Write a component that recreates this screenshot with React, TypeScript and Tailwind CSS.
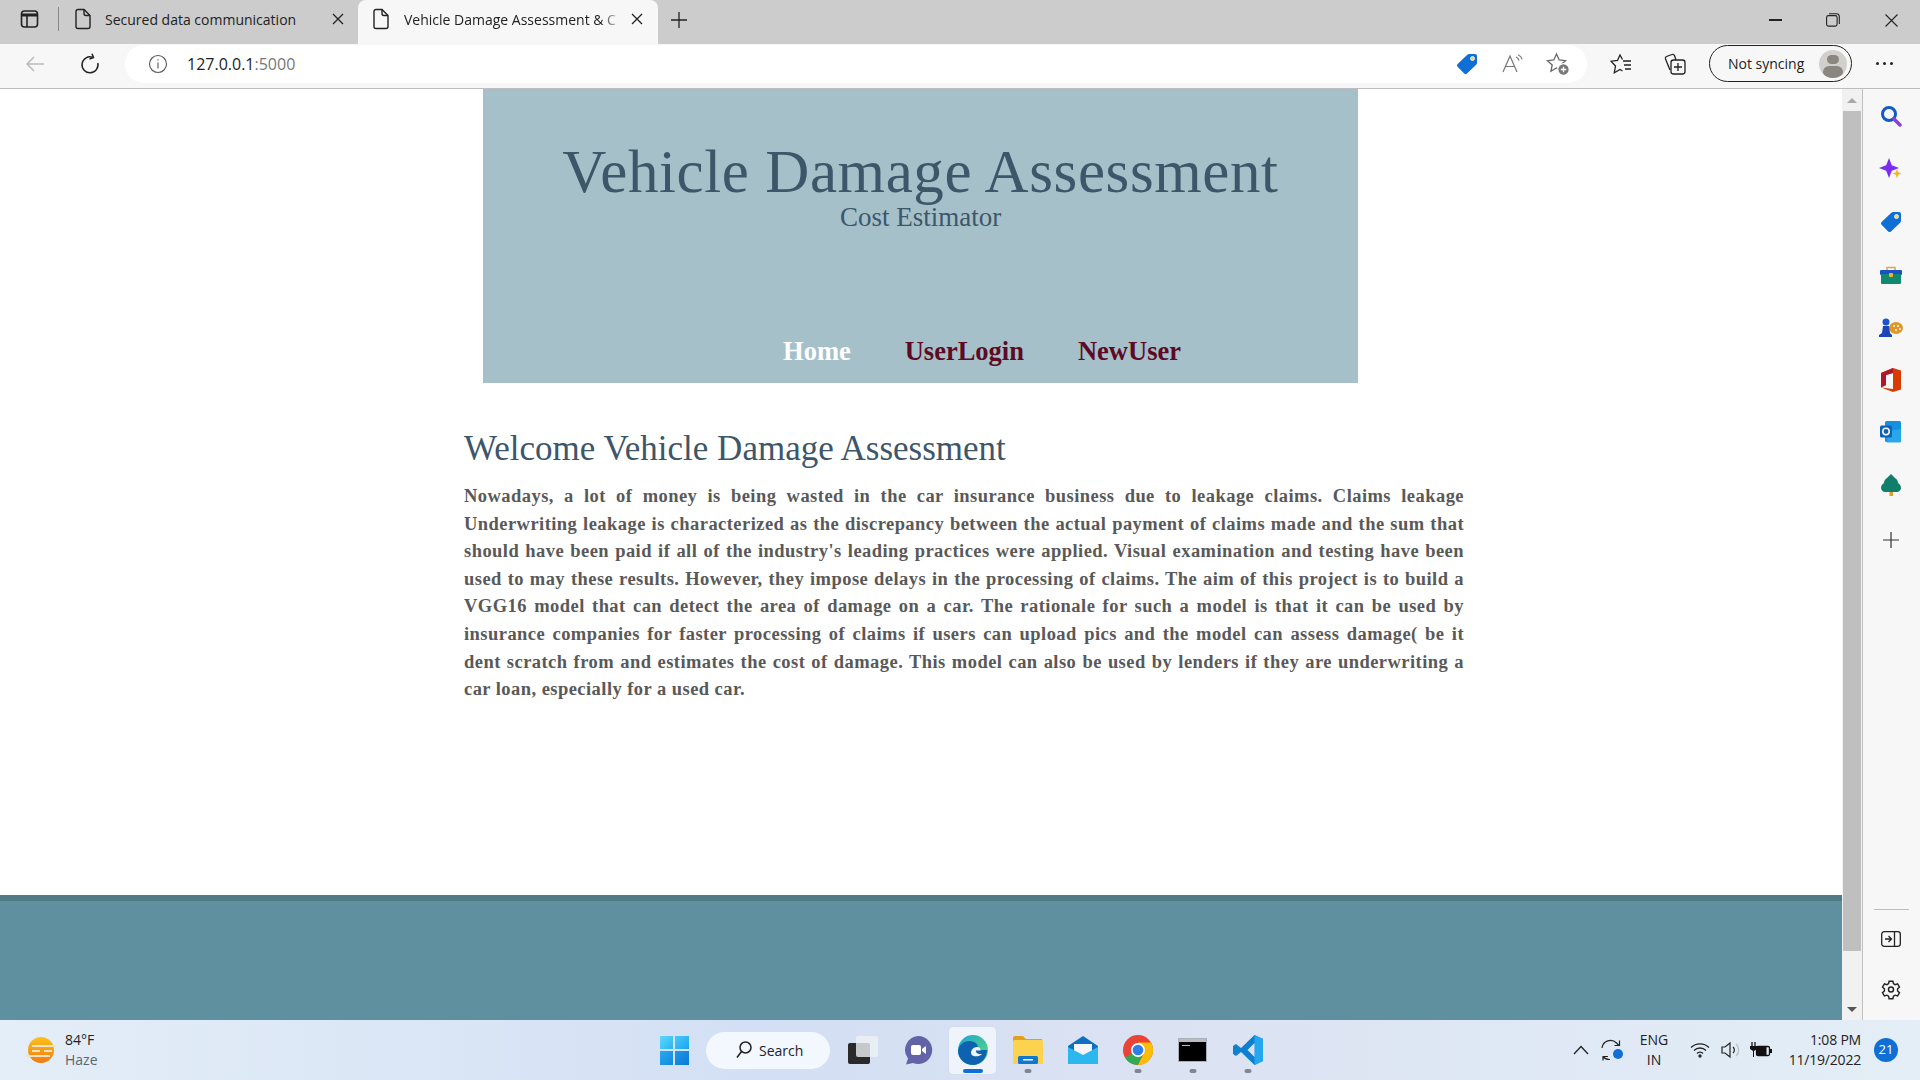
import React from 'react';

const lines = [
	'Nowadays, a lot of money is being wasted in the car insurance business due to leakage claims. Claims leakage',
	'Underwriting leakage is characterized as the discrepancy between the actual payment of claims made and the sum that',
	"should have been paid if all of the industry's leading practices were applied. Visual examination and testing have been",
	'used to may these results. However, they impose delays in the processing of claims. The aim of this project is to build a',
	'VGG16 model that can detect the area of damage on a car. The rationale for such a model is that it can be used by',
	'insurance companies for faster processing of claims if users can upload pics and the model can assess damage( be it',
	'dent scratch from and estimates the cost of damage. This model can also be used by lenders if they are underwriting a',
];

function PageIcon() {
	return (
		<svg width="20" height="22" viewBox="0 0 20 22" fill="none" stroke="#222" strokeWidth="1.4">
			<path d="M3 3.5a2 2 0 0 1 2-2h6l6 6v11a2 2 0 0 1-2 2H5a2 2 0 0 1-2-2z" />
			<path d="M11 1.5v4a2 2 0 0 0 2 2h4" />
		</svg>
	);
}

function CloseIcon() {
	return (
		<svg width="12" height="12" viewBox="0 0 12 12" stroke="#222" strokeWidth="1.3">
			<path d="M1 1l10 10M11 1L1 11" />
		</svg>
	);
}

function TagIcon({ size = 22 }: { size?: number }) {
	return (
		<svg width={size} height={size} viewBox="0 0 22 22">
			<path d="M13 1h6a2 2 0 0 1 2 2v7a2 2 0 0 1-.6 1.400L11 20.400a2 2 0 0 1-2.800 0L1.600 13.800a2 2 0 0 1 0-2.800L11.600 1.600A2 2 0 0 1 13 1z" fill="#0f6fd6" />
			<circle cx="16.500" cy="5.500" r="2" fill="#fbd14b" stroke="#fff" strokeWidth="0.8" />
		</svg>
	);
}

function TabBar() {
	return (
		<div className="flex h-[44px] bg-[#cccccc] font-['Open_Sans',sans-serif] text-[14px] text-[#222]">
			<div className="flex h-[38px] w-[59px] items-center">
				<svg className="ml-[20px]" width="20" height="20" viewBox="0 0 20 20" fill="none" stroke="#222" strokeWidth="1.6">
					<rect x="1.500" y="2" width="16" height="16" rx="3" />
					<path d="M1.500 6h16" strokeWidth="3" />
					<path d="M7 6v12" />
				</svg>
				<div className="ml-[18px] h-[24px] w-px bg-[#888]" />
			</div>
			<div className="flex h-[38px] w-[299px] items-center pl-[14px]">
				<PageIcon />
				<span className="ml-[12px] w-[227px] truncate">Secured data communication</span>
				<CloseIcon />
			</div>
			<div className="flex h-[44px] w-[300px] items-center rounded-t-[8px] bg-[#f7f7f7] pb-[6px] pl-[13px]">
				<PageIcon />
				<span className="ml-[13px] w-[214px] whitespace-nowrap [mask-image:linear-gradient(90deg,#000_92%,#0003)]">Vehicle Damage Assessment &amp; C</span>
				<div className="ml-[13px] flex">
					<CloseIcon />
				</div>
			</div>
			<div className="flex h-[40px] w-[42px] items-center justify-center">
				<svg width="16" height="16" viewBox="0 0 16 16" stroke="#222" strokeWidth="1.3">
					<path d="M8 0v16M0 8h16" />
				</svg>
			</div>
			<div className="ml-auto flex h-[40px] items-center">
				<div className="flex w-[57px] justify-center">
					<div className="h-[1.500px] w-[13px] bg-[#222]" />
				</div>
				<div className="flex w-[58px] justify-center">
					<svg width="14" height="14" viewBox="0 0 14 14" fill="none" stroke="#222" strokeWidth="1.100">
						<rect x="0.600" y="2.600" width="10.500" height="10.500" rx="1.800" />
						<path d="M3 .7h7.500a2.800 2.800 0 0 1 2.800 2.800V11" />
					</svg>
				</div>
				<div className="flex w-[58px] justify-center">
					<svg width="13" height="13" viewBox="0 0 13 13" stroke="#222" strokeWidth="1.100">
						<path d="M.5.5l12 12M12.500.5l-12 12" />
					</svg>
				</div>
			</div>
		</div>
	);
}

function Toolbar() {
	return (
		<div className="flex h-[45px] items-center border-b border-[#bdbdbd] bg-[#f7f7f7] pb-[5px] font-['Open_Sans',sans-serif] text-[#222]">
			<div className="flex w-[70px] justify-center">
				<svg width="20" height="18" viewBox="0 0 20 18" fill="none" stroke="#bcbcbc" strokeWidth="1.500">
					<path d="M19 9H2M9 2L2 9l7 7" />
				</svg>
			</div>
			<div className="flex w-[40px] justify-center">
				<svg width="20" height="22" viewBox="0 0 20 22" fill="none" stroke="#222" strokeWidth="1.500">
					<path d="M12.500 4.200A8 8 0 1 0 17.800 10" />
					<path d="M12 .8l1.500 3.800-4 1.400" />
				</svg>
			</div>
			<div className="ml-[15px] flex h-[38px] w-[1462px] items-center rounded-full bg-white">
				<svg className="ml-[23px]" width="20" height="20" viewBox="0 0 20 20" fill="none" stroke="#555" strokeWidth="1.100">
					<circle cx="10" cy="10" r="8.500" />
					<path d="M10 8.500v6" />
					<path d="M10 5.200v1.300" />
				</svg>
				<span className="ml-[19px] text-[16px]">
					127.0.0.1<span className="text-[#777]">:5000</span>
				</span>
				<div className="ml-auto flex items-center">
					<TagIcon />
					<svg className="ml-[24px]" width="22" height="20" viewBox="0 0 22 20" fill="none" stroke="#777" strokeWidth="1.200">
						<path d="M1 18L8 2l7 16M3.500 12.500h9" />
						<path d="M14 3c1.500.5 2.500 2 3 3.500M16 .8c2 .8 3.500 2.500 4.200 4.500" />
					</svg>
					<svg className="mr-[17px] ml-[22px]" width="24" height="24" viewBox="0 0 24 24" fill="none" stroke="#666" strokeWidth="1.300">
						<path d="M10.500 2l2.700 6 6.300.7-4.700 4.300 1.300 6.300-5.600-3.300-5.600 3.300 1.300-6.300L1.500 8.700l6.300-.7z" />
						<circle cx="17.500" cy="17.500" r="5.800" fill="#777" stroke="#fff" />
						<path d="M17.500 14.800v5.400M14.800 17.500h5.400" stroke="#fff" />
					</svg>
				</div>
			</div>
			<div className="ml-[14px] flex w-[40px] justify-center">
				<svg width="22" height="20" viewBox="0 0 22 20" fill="none" stroke="#222" strokeWidth="1.300">
					<path d="M12.500 5.500L10 1 7.500 6.500 1 7.200 5.500 12 4.300 18.700 10 15.500l2.500 1.500" />
					<path d="M13 7h8M14 11h7M15 15h6" />
				</svg>
			</div>
			<div className="ml-[14px] flex w-[40px] justify-center">
				<svg width="22" height="22" viewBox="0 0 22 22" fill="none" stroke="#222" strokeWidth="1.300">
					<rect x="7" y="7" width="14" height="14" rx="2.500" />
					<path d="M6 17L1.500 6a2 2 0 0 1 1-2.500L8 1.500a2 2 0 0 1 2.500 1L12 7" />
					<path d="M14 10v8M10 14h8" />
				</svg>
			</div>
			<div className="ml-[14px] flex h-[37px] w-[143px] items-center rounded-full border-[1.500px] border-[#222] pl-[18px] text-[14px]">
				<span className="whitespace-nowrap">Not syncing</span>
				<div className="ml-[15px] flex h-[28px] w-[28px] flex-col items-center overflow-hidden rounded-full bg-[#d2d0cc]">
					<div className="mt-[5px] h-[12px] w-[12px] rounded-full bg-[#8a8680]" />
					<div className="mt-[2px] h-[14px] w-[20px] rounded-full bg-[#8a8680]" />
				</div>
			</div>
			<div className="ml-[24px] flex gap-[4px]">
				<div className="h-[3px] w-[3px] rounded-full bg-[#222]" />
				<div className="h-[3px] w-[3px] rounded-full bg-[#222]" />
				<div className="h-[3px] w-[3px] rounded-full bg-[#222]" />
			</div>
		</div>
	);
}

function PageContent() {
	return (
		<div className="flex h-full min-w-0 flex-1 flex-col bg-white font-['Liberation_Serif',serif]">
			<header className="ml-[483px] flex h-[294px] w-[875px] flex-col items-center bg-[#a5c0c9]">
				<h1 className="mt-[52px] text-[61px] leading-[61px] tracking-[0.6px] whitespace-nowrap text-[#3d566a]">Vehicle Damage Assessment</h1>
				<p className="text-[27px] leading-[30px] text-[#3d566a]">Cost Estimator</p>
				<nav className="mt-[104px] ml-[123px] flex gap-[54px] text-[26.500px] leading-[30px] font-bold text-[#5e0a24]">
					<a className="text-white">Home</a>
					<a>UserLogin</a>
					<a>NewUser</a>
				</nav>
			</header>
			<main className="ml-[464px] w-[1000px]">
				<h2 className="mt-[46px] text-[35px] leading-[40px] text-[#3d566a]">Welcome Vehicle Damage Assessment</h2>
				<div className="mt-[14px] text-[18.500px] leading-[27.600px] font-bold tracking-[0.45px] text-[#595959]">
					{lines.map(line => (
						<p key={line} className="[text-align-last:justify]">{line}</p>
					))}
					<p>car loan, especially for a used car.</p>
				</div>
			</main>
			<footer className="mt-auto h-[125px] border-t-[6px] border-[#4f7a86] bg-[#5f909f]" />
		</div>
	);
}

function Scrollbar() {
	return (
		<div className="flex h-full w-[20px] flex-col items-center bg-[#f1f1f1]">
			<div className="flex h-[22px] items-center">
				<div className="h-0 w-0 border-x-[5px] border-b-[5px] border-x-transparent border-b-[#a8a8a8]" />
			</div>
			<div className="h-[840px] w-[18px] bg-[#bfbfbf]" />
			<div className="flex flex-1 items-center pt-[48px]">
				<div className="h-0 w-0 border-x-[5px] border-t-[5px] border-x-transparent border-t-[#555]" />
			</div>
		</div>
	);
}

function SideItem({ children, h }: { children: React.ReactNode; h: string }) {
	return <div className={`flex w-full items-center justify-center pr-[2px] ${h}`}>{children}</div>;
}

function Sidebar() {
	return (
		<div className="flex h-full w-[58px] flex-col items-center border-l border-[#c0c0c0] bg-[#f7f7f7] pt-[1px] pb-[4px]">
			<SideItem h="h-[52px]">
				<svg width="22" height="22" viewBox="0 0 22 22" fill="none">
					<circle cx="9" cy="9" r="6.500" stroke="#1459c7" strokeWidth="3" />
					<path d="M14 14l6 6" stroke="#8a3fd6" strokeWidth="3.500" strokeLinecap="round" />
				</svg>
			</SideItem>
			<SideItem h="h-[54px]">
				<svg width="23" height="23" viewBox="0 0 23 23">
					<path d="M10 0l2.800 7.200 7.200 2.800-7.200 2.800L10 20l-2.800-7.200L0 10l7.200-2.800z" fill="#7a2cf0" />
					<path d="M18 11l1.200 3.300 3.300 1.200-3.300 1.200L18 20.500l-1.200-3.800-3.300-1.200 3.300-1.200z" fill="#fbb41a" />
				</svg>
			</SideItem>
			<SideItem h="h-[52px]"><TagIcon /></SideItem>
			<SideItem h="h-[54px]">
				<svg width="22" height="18" viewBox="0 0 22 18" fill="none">
					<path d="M7 4V1.500h8V4" stroke="#e0a83a" strokeWidth="1.500" />
					<rect y="4" width="22" height="5" rx="1" fill="#1b4fc4" />
					<rect x="1" y="8" width="20" height="10" rx="1" fill="#0f8a70" />
					<rect x="9" y="7" width="4" height="4" rx="1" fill="#f1b32b" />
				</svg>
			</SideItem>
			<SideItem h="h-[52px]">
				<svg width="24" height="20" viewBox="0 0 24 20">
					<ellipse cx="17" cy="10" rx="7" ry="6" fill="#e0962a" />
					<circle cx="15" cy="8" r="1.100" fill="#fff3d0" />
					<circle cx="19" cy="8" r="1.100" fill="#fff3d0" />
					<circle cx="21" cy="11" r="1.100" fill="#fff3d0" />
					<circle cx="17" cy="12" r="1.100" fill="#fff3d0" />
					<circle cx="7" cy="4" r="3.500" fill="#1a56c9" />
					<path d="M4 8h6l1 7 2 2v2H0v-2l3-2z" fill="#1a46b8" />
				</svg>
			</SideItem>
			<SideItem h="h-[52px]">
				<svg width="20" height="24" viewBox="0 0 20 24">
					<path d="M0 5l12-5 8 2.500v19L12 24 0 19.500 12 21V5L5 7v10L0 19.500z" fill="#d83b01" />
					<path d="M0 5l12-5v5L5 7v10L0 19.500z" fill="#b3162c" />
				</svg>
			</SideItem>
			<SideItem h="h-[52px]">
				<svg width="22" height="22" viewBox="0 0 22 22">
					<rect x="5" y="0" width="16" height="21" rx="1.500" fill="#1490df" />
					<path d="M8 10l13-2v12a1.500 1.500 0 0 1-1.500 1.500H7z" fill="#28a8ea" />
					<rect x="0" y="4.500" width="12" height="12" rx="1.500" fill="#0f62b5" />
					<circle cx="6" cy="10.500" r="3.200" fill="none" stroke="#fff" strokeWidth="1.500" />
				</svg>
			</SideItem>
			<SideItem h="h-[54px]">
				<svg width="20" height="22" viewBox="0 0 20 22">
					<rect x="8.500" y="15" width="3.500" height="7" fill="#e0a020" />
					<path d="M10 0l4 4c2 1 3 3 3 5 2 1 3 3 3 5 0 2-2 4-4 4H4c-2 0-4-2-4-4 0-2 1-4 3-5 0-2 1-4 3-5z" fill="#0f7f6c" />
				</svg>
			</SideItem>
			<SideItem h="h-[56px]">
				<svg width="16" height="16" viewBox="0 0 16 16" stroke="#333" strokeWidth="1.200">
					<path d="M8 0v16M0 8h16" />
				</svg>
			</SideItem>
			<div className="mt-auto h-px w-[35px] bg-[#bdbdbd]" />
			<SideItem h="h-[58px]">
				<svg width="20" height="16" viewBox="0 0 20 16" fill="none" stroke="#222" strokeWidth="1.300">
					<rect x=".7" y=".7" width="18.600" height="14.600" rx="2.500" />
					<path d="M13.500 1v14M4 8h6M7.500 5l3 3-3 3" />
				</svg>
			</SideItem>
			<SideItem h="h-[48px]">
				<svg className="mb-[6px]" width="20" height="21" viewBox="0 0 24 24" fill="none" stroke="#222" strokeWidth="1.700">
					<path d="M9.700 2h4.600l.6 3 2 1.200 3-1 2.300 4-2.300 2v2.600l2.300 2-2.300 4-3-1-2 1.200-.6 3H9.700l-.6-3-2-1.200-3 1-2.300-4 2.300-2v-2.600l-2.300-2 2.300-4 3 1 2-1.200z" />
					<circle cx="12" cy="12" r="3" />
				</svg>
			</SideItem>
		</div>
	);
}

function Dot() {
	return <div className="absolute bottom-[0px] left-1/2 h-[4px] w-[7px] -translate-x-1/2 rounded-full bg-[#7f8690]" />;
}

function TaskItem({ children, dot }: { children: React.ReactNode; dot?: boolean }) {
	return (
		<div className="relative flex h-[46px] w-[55px] items-center justify-center">
			{children}
			{dot && <Dot />}
		</div>
	);
}

function Taskbar() {
	return (
		<div className="flex h-[60px] items-center bg-[linear-gradient(90deg,#e4eef8_0%,#d3dff4_40%,#dbe2f2_60%,#e3eef7_100%)] font-['Open_Sans',sans-serif] text-[#222]">
			<div className="flex w-[652px] items-center pl-[26px]">
				<svg width="30" height="28" viewBox="0 0 30 28">
					<defs>
						<linearGradient id="sun" x1="0" y1="0" x2="0" y2="1">
							<stop offset="0" stopColor="#fcc21b" />
							<stop offset="1" stopColor="#f07a10" />
						</linearGradient>
					</defs>
					<circle cx="15" cy="14" r="13" fill="url(#sun)" />
					<path d="M6 10h24M0 20h24M6 15h8M18 15h8" stroke="#f0e2c4" strokeWidth="2" />
				</svg>
				<div className="ml-[9px] flex flex-col text-[14px] leading-[20px]">
					<span>84°F</span>
					<span className="text-[#5c6670]">Haze</span>
				</div>
			</div>
			<div className="flex w-[44px] justify-center">
				<div className="grid h-[29px] w-[29px] grid-cols-2 gap-[1.500px]">
					<div className="bg-[linear-gradient(135deg,#5fd8fb,#2ab5f2)]" />
					<div className="bg-[linear-gradient(135deg,#48c9f8,#1ba5ee)]" />
					<div className="bg-[linear-gradient(135deg,#2aa8ee,#0f8be0)]" />
					<div className="bg-[linear-gradient(135deg,#1f98e8,#0a78d4)]" />
				</div>
			</div>
			<div className="ml-[10px] flex h-[37px] w-[124px] items-center rounded-full bg-[#f3f7fe] pl-[30px] text-[14px]">
				<svg width="16" height="18" viewBox="0 0 16 18" fill="none" stroke="#222" strokeWidth="1.500">
					<circle cx="9.500" cy="6.500" r="5.500" />
					<path d="M5.500 10.500L1 16.500" />
				</svg>
				<span className="ml-[7px]">Search</span>
			</div>
			<div className="ml-[5px] flex items-center">
				<TaskItem>
					<div className="relative h-[28px] w-[30px]">
						<div className="absolute bottom-0 left-0 h-[21px] w-[22px] rounded-[2px] bg-[#2a2a2a]" />
						<div className="absolute top-0 right-0 h-[21px] w-[22px] rounded-[2px] bg-[#eef0f4]/80" />
					</div>
				</TaskItem>
				<TaskItem>
					<svg width="30" height="30" viewBox="0 0 30 30">
						<path d="M15 1a14 14 0 1 1-5 27l-7 1.500 2-6A14 14 0 0 1 15 1z" fill="#6264a7" />
						<rect x="8" y="10" width="10" height="10" rx="2" fill="#fff" />
						<path d="M19 14l4-3v8l-4-3z" fill="#fff" />
					</svg>
				</TaskItem>
				<div className="relative flex h-[47px] w-[55px] items-center justify-center">
					<div className="absolute inset-y-0 left-[4px] w-[47px] rounded-[4px] bg-[#eef3fc] shadow-[0_0_1px_#b9c2d4]" />
					<svg className="relative" width="32" height="32" viewBox="0 0 32 32">
						<defs>
							<linearGradient id="edgeA" x1="0" y1="0" x2="1" y2="1">
								<stop offset="0" stopColor="#1ba7d8" />
								<stop offset="1" stopColor="#5fdc6c" />
							</linearGradient>
						</defs>
						<circle cx="16" cy="16" r="15" fill="url(#edgeA)" />
						<path d="M1 17C2 9 10 5 17 8c4 2 5 6 3 8h10c0 8-6 15-14 15C8 31 1 25 1 17z" fill="#0f62b0" />
						<path d="M14 19c0-3 2.500-6 6-6 2.500 0 4 1.500 3.500 3.500H19c-.5 2 2 4 6 3.500-3 3.500-11 3-11-1z" fill="#eef3fc" />
					</svg>
					<div className="absolute bottom-[1px] h-[4px] w-[20px] rounded-full bg-[#0f6fd6]" />
				</div>
				<TaskItem dot>
					<svg width="30" height="28" viewBox="0 0 30 28">
						<path d="M0 2a2 2 0 0 1 2-2h8l3 3h16v5H0z" fill="#e0a020" />
						<rect y="4" width="30" height="24" rx="1.500" fill="#fcd24e" />
						<rect x="5" y="20" width="20" height="8" rx="1.500" fill="#1178d0" />
						<rect x="10" y="23" width="10" height="1.500" fill="#fff" />
					</svg>
				</TaskItem>
				<TaskItem>
					<svg width="30" height="30" viewBox="0 0 30 30">
						<path d="M15 1L30 11v18H0V11z" fill="#0f6fc0" />
						<path d="M6 9h18v10l-9 5-9-5z" fill="#f4f6fb" />
						<path d="M0 12l15 8 15-8v17H0z" fill="#2cb8ee" />
					</svg>
				</TaskItem>
				<TaskItem dot>
					<svg width="30" height="30" viewBox="0 0 30 30">
						<circle cx="15" cy="15" r="15" fill="#ea4335" />
						<path d="M15 15L2 22.500A15 15 0 0 0 15 30l7-15z" fill="#34a853" />
						<path d="M15 7.500h13A15 15 0 0 1 15 30l7.500-15z" fill="#fbbc04" />
						<circle cx="15" cy="15" r="7" fill="#fff" />
						<circle cx="15" cy="15" r="5.300" fill="#2f7de8" />
					</svg>
				</TaskItem>
				<TaskItem dot>
					<div className="h-[22px] w-[27px] border-t-[3px] border-[#b9bdc3] bg-black shadow-[0_0_0_1px_#aab0b8]">
						<div className="mt-[3px] ml-[3px] h-[1px] w-[8px] bg-[#bbb]" />
					</div>
				</TaskItem>
				<TaskItem dot>
					<svg width="30" height="30" viewBox="0 0 30 30">
						<path d="M21.500 0L30 4v22l-8.500 4L8 17 3 21l-3-2v-8l3-2 5 4z" fill="#0f7fd0" />
						<path d="M21.500 0L30 4v22l-8.500 4z" fill="#23a8ef" />
						<path d="M21.500 8l-7 7 7 7z" fill="#d8e2f2" />
					</svg>
				</TaskItem>
			</div>
			<div className="ml-auto flex items-center text-[14px] text-[#222]">
				<svg width="16" height="10" viewBox="0 0 16 10" fill="none" stroke="#222" strokeWidth="1.300">
					<path d="M1 9l7-7.500L15 9" />
				</svg>
				<svg className="ml-[11px]" width="24" height="24" viewBox="0 0 24 24">
					<path d="M2 10a8.500 8.500 0 0 1 14.500-5l2.500 2.500M19.500 2.500v5h-5M8 18.500H3v4M3 18.500a8.500 8.500 0 0 0 7 3" fill="none" stroke="#222" strokeWidth="1.200" />
					<circle cx="18" cy="16" r="5" fill="#0f6fd6" />
				</svg>
				<div className="ml-[12px] flex w-[36px] flex-col items-center text-[14px] leading-[20px]">
					<span>ENG</span>
					<span>IN</span>
				</div>
				<svg className="ml-[18px]" width="20" height="16" viewBox="0 0 20 16" fill="none" stroke="#222" strokeWidth="1.300">
					<path d="M1 5.500a13 13 0 0 1 18 0M4 8.500a8.500 8.500 0 0 1 12 0M7 11.500a4 4 0 0 1 6 0" />
					<circle cx="10" cy="14" r="1" fill="#222" />
				</svg>
				<svg className="ml-[11px]" width="20" height="18" viewBox="0 0 20 18" fill="none" stroke="#222" strokeWidth="1.200">
					<path d="M1 6v6h3l5 4V2L4 6z" />
					<path d="M12 6a4 4 0 0 1 0 6" />
					<path d="M15 3a8 8 0 0 1 0 12" stroke="#bbb" />
				</svg>
				<svg className="ml-[9px]" width="22" height="16" viewBox="0 0 22 16" fill="none">
					<path d="M2 0v4M5 0v4" stroke="#111" strokeWidth="1.300" />
					<path d="M0 4h7v3L4 9H3L0 7z" fill="#111" />
					<path d="M3.500 9v6" stroke="#111" />
					<rect x="6.500" y="4.500" width="13" height="9" rx="1.500" stroke="#111" strokeWidth="1.300" />
					<rect x="6.500" y="4.500" width="10" height="9" fill="#111" />
					<rect x="20" y="7" width="2" height="4" fill="#111" />
				</svg>
				<div className="ml-[19px] flex w-[70px] flex-col items-end text-[14px] leading-[20px] tracking-[-0.2px] whitespace-nowrap">
					<span>1:08 PM</span>
					<span>11/19/2022</span>
				</div>
				<div className="mr-[22px] ml-[13px] flex h-[24px] w-[24px] items-center justify-center rounded-full bg-[#0f6fd6] text-[13px] text-white">21</div>
			</div>
		</div>
	);
}

function App() {
	return (
		<div className="flex h-[1080px] w-[1920px] flex-col overflow-hidden">
			<TabBar />
			<Toolbar />
			<div className="flex h-[931px] min-h-0">
				<PageContent />
				<Scrollbar />
				<Sidebar />
			</div>
			<Taskbar />
		</div>
	);
}

export default App;
